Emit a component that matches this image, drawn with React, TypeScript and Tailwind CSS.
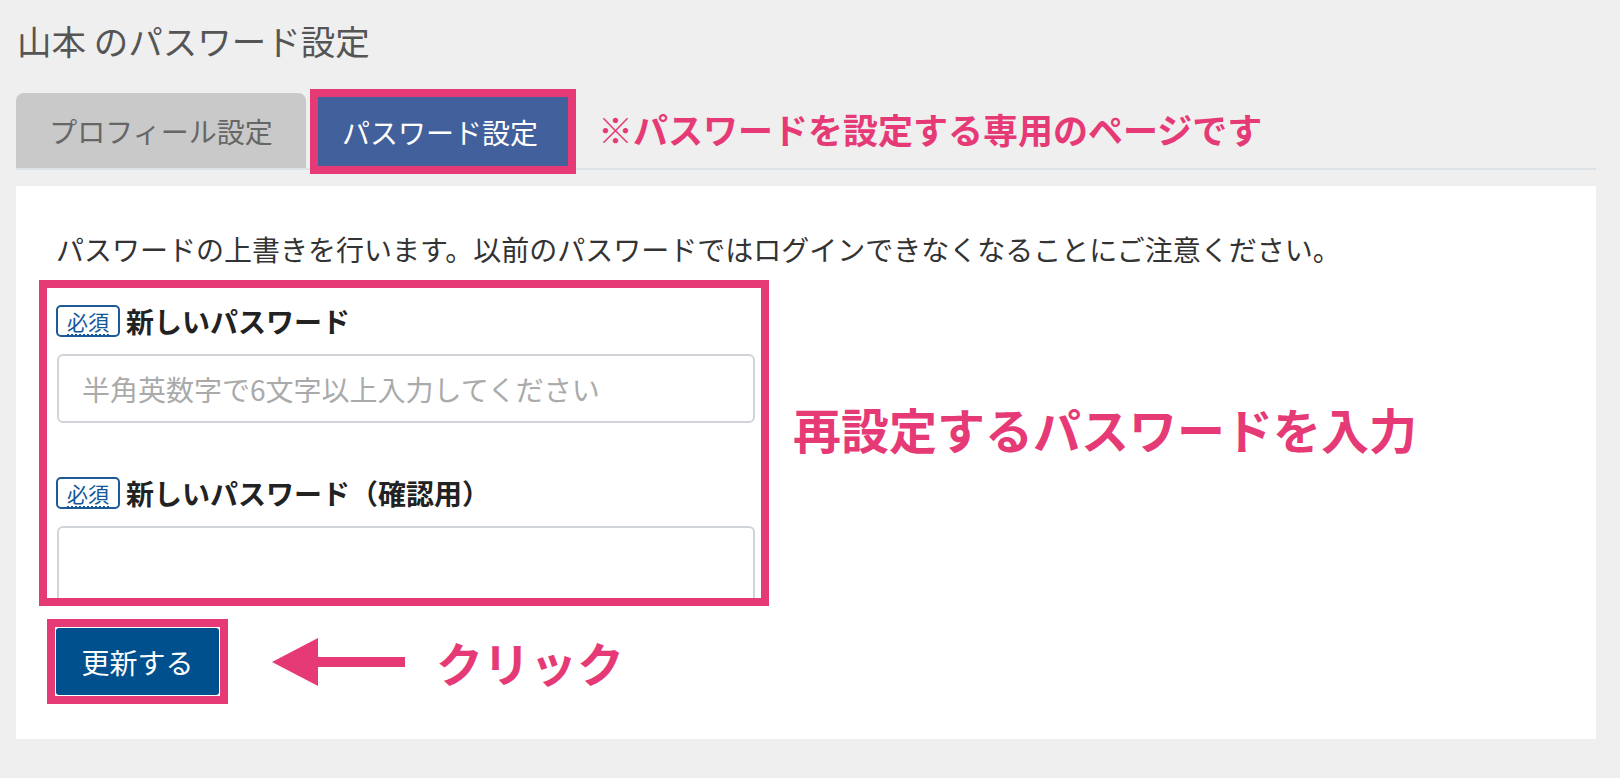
import React from "react";

const PINK = "border-[#e63a76]";

function Badge() {
  return (
    <span className="inline-flex h-[32px] w-[64px] items-center justify-center rounded-[5px] border-2 border-[#1d5a98] bg-white">
      <span className="text-[21px] leading-[22px] text-[#13579a] underline decoration-dotted decoration-2 underline-offset-[4px]">
        必須
      </span>
    </span>
  );
}

export default function App() {
  return (
    <div className="min-h-screen bg-[#efefef] pl-[16px] pr-[24px] pb-[39px] font-['Noto_Sans_CJK_JP','Liberation_Sans',sans-serif]">
      <h1 className="pl-[1px] pt-[24px] text-[34.5px] font-normal leading-[33px] text-[#555555]">
        山本 のパスワード設定
      </h1>

      <div className="mt-[32px] flex h-[81px] items-end border-b-2 border-[#dde2e6]">
        <div className="flex h-[75px] w-[290px] items-center justify-center rounded-t-[8px] bg-[#c9c9c9] text-[28px] leading-[28px] text-[#666666]">
          プロフィール設定
        </div>
        <div className={`-mb-[6px] ml-[4px] flex h-[85px] w-[266px] items-center justify-center border-[8px] ${PINK} bg-[#42609b] pr-[6px] text-[28px] leading-[28px] text-white`}>
          パスワード設定
        </div>
        <div className="mb-[22px] ml-[22px] self-end text-[35px] font-bold leading-[35px] text-[#e63a76]">
          ※パスワードを設定する専用のページです
        </div>
      </div>

      <div className="mt-[16px] h-[553px] bg-white pl-[23px] pt-[49px]">
        <p className="pl-[17px] text-[28px] leading-[28px] text-[#333333]">
          パスワードの上書きを行います。以前のパスワードではログインできなくなることにご注意ください。
        </p>

        <div className="mt-[17px] flex items-start">
          <div className={`w-[730px] border-[8px] ${PINK} pl-[9px] pr-[6px] pt-[17px]`}>
            <div className="flex items-center gap-[6px]">
              <Badge />
              <span className="text-[28px] font-bold leading-[28px] text-[#222222]">新しいパスワード</span>
            </div>
            <div className="ml-[1px] mt-[17px] flex h-[69px] items-center rounded-[6px] border-2 border-[#d0d4d9] pl-[23px] text-[28px] leading-[28px] text-[#aaaaaa]">
              半角英数字で6文字以上入力してください
            </div>
            <div className="mt-[54px] flex items-center gap-[6px]">
              <Badge />
              <span className="text-[28px] font-bold leading-[28px] text-[#222222]">新しいパスワード（確認用）</span>
            </div>
            <div className="ml-[1px] mt-[17px] h-[72px] rounded-t-[6px] border-2 border-b-0 border-[#d0d4d9]" />
          </div>
          <div className="ml-[24px] mt-[124px] text-[48px] font-bold leading-[48px] text-[#e63a76]">
            再設定するパスワードを入力
          </div>
        </div>

        <div className="mt-[13px] flex items-center">
          <div className={`ml-[8px] h-[85px] w-[181px] border-[8px] ${PINK} p-[1px]`}>
            <div className="flex h-full w-full items-center justify-center rounded-[3px] bg-[#01508e] text-[28px] leading-[28px] text-white">
              更新する
            </div>
          </div>
          <svg className="ml-[44px]" width="133" height="48" viewBox="0 0 133 48">
            <polygon points="0,24 46,0 46,48" fill="#e63a76" />
            <rect x="45" y="19" width="88" height="10" fill="#e63a76" />
          </svg>
          <div className="ml-[31px] text-[47px] font-bold leading-[47px] text-[#e63a76]">クリック</div>
        </div>
      </div>
    </div>
  );
}
